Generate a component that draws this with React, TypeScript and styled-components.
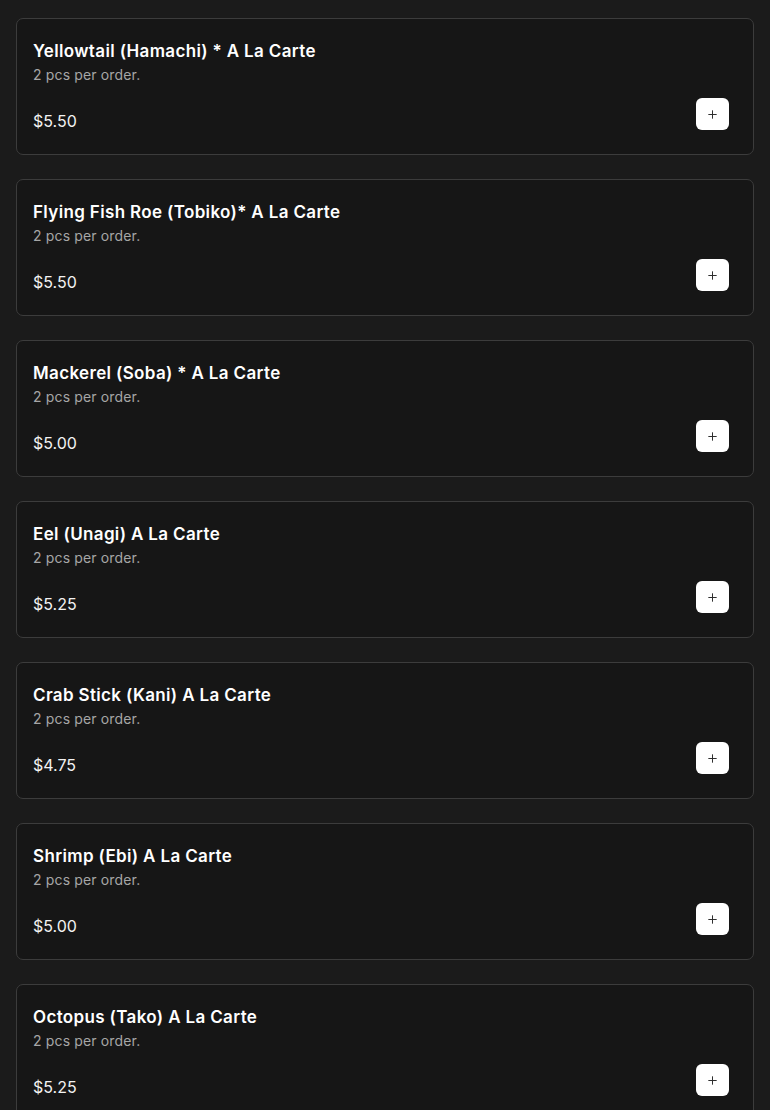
import React from "react";
import styled, { createGlobalStyle } from "styled-components";
import { Plus } from "lucide-react";

const GlobalStyle = createGlobalStyle`
  body {
    margin: 0;
    background-color: #1b1b1b;
    font-family: "Inter", "Open Sans", sans-serif;
    color: #fff;
  }
`;

const Wrapper = styled.main`
  display: flex;
  flex-direction: column;
  gap: 24px;
  padding: 18px 16px;
`;

const Card = styled.div`
  background-color: #161616;
  border: 1px solid #3c3c3c;
  border-radius: 7px;
  padding: 20px 24px 21px 16px;
`;

const Title = styled.h3`
  margin: 0;
  font-size: 17px;
  font-weight: 600;
  line-height: 24px;
  color: #fff;
  letter-spacing: 0.35px;
`;

const Note = styled.p`
  margin: 2px 0 0;
  font-size: 14px;
  line-height: 20px;
  color: #a6a6a6;
  letter-spacing: 0.15px;
`;

const Footer = styled.div`
  display: flex;
  justify-content: space-between;
  align-items: flex-start;
  margin-top: 13px;
`;

const Price = styled.span`
  margin-top: 11px;
  font-size: 16px;
  line-height: 24px;
  color: #f2f2f2;
`;

const AddButton = styled.button`
  display: flex;
  align-items: center;
  justify-content: center;
  width: 33px;
  height: 32px;
  padding: 0;
  border: none;
  border-radius: 6px;
  background-color: #fff;
  color: #2a2a2a;
  cursor: pointer;
`;

const items = [
  { name: "Yellowtail (Hamachi) * A La Carte", price: "$5.50" },
  { name: "Flying Fish Roe (Tobiko)* A La Carte", price: "$5.50" },
  { name: "Mackerel (Soba) * A La Carte", price: "$5.00" },
  { name: "Eel (Unagi) A La Carte", price: "$5.25" },
  { name: "Crab Stick (Kani) A La Carte", price: "$4.75" },
  { name: "Shrimp (Ebi) A La Carte", price: "$5.00" },
  { name: "Octopus (Tako) A La Carte", price: "$5.25" },
];

const App = () => {
  return (
    <>
      <GlobalStyle />
      <Wrapper>
        {items.map((item) => (
          <Card key={item.name}>
            <Title>{item.name}</Title>
            <Note>2 pcs per order.</Note>
            <Footer>
              <Price>{item.price}</Price>
              <AddButton aria-label="Add">
                <Plus size={13} strokeWidth={1.8} />
              </AddButton>
            </Footer>
          </Card>
        ))}
      </Wrapper>
    </>
  );
};

export default App;
